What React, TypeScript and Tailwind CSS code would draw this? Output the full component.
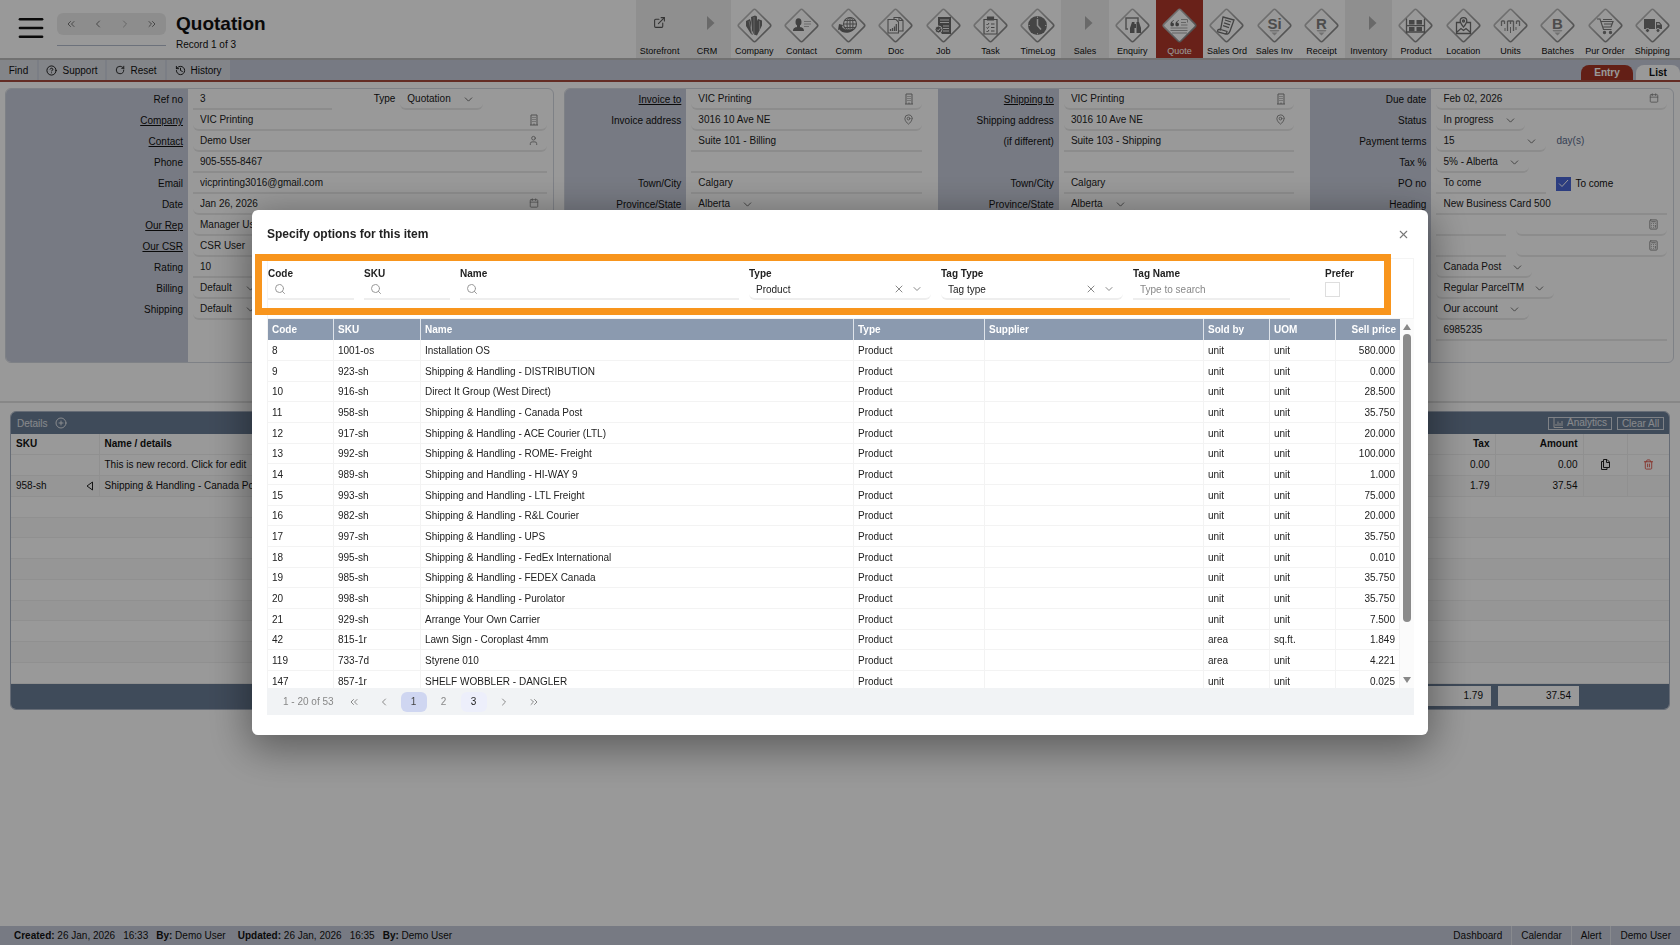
import React from "react";
import { Calculator, Calendar, ChevronDown, ChevronLeft, ChevronRight, ChevronsLeft, ChevronsRight, CircleHelp, CirclePlus, ExternalLink, History, MapPin, Menu, RotateCw, Search, Trash2, User, X } from "lucide-react";

type NavItem = {
  name: string;
  kind: "icon" | "group" | "link";
  glyph?: React.ReactNode;
};

const letter = (text: string) => (
  <>
    <text x="18.500" y="21.500" textAnchor="middle" fontSize="15" fontWeight="bold" fontFamily="Liberation Sans, sans-serif" fill="#808080">{text}</text>
    <path d="M13.500 23h10l-1 1.500h-8zM15.500 25.500h6l-3 3z" fill="#bdbdbd" />
  </>
);

const navItems: NavItem[] = [
  { name: "Storefront", kind: "link" },
  { name: "CRM", kind: "group" },
  {
    name: "Company", kind: "icon",
    glyph: <><path d="M10 14l4-2 1 3v9l2 4-2-1-5-8zM15 10l4-1.500 2 1v19l-3-1-2-4zM22 12l4 1.500v5l-4 8-1 2V14z" fill="#707070" /><path d="M18 10v17M13 14l3 13M23.500 14v10" stroke="#b8b8b8" strokeWidth=".8" /></>,
  },
  {
    name: "Contact", kind: "icon",
    glyph: <><ellipse cx="15.500" cy="15" rx="3" ry="3.800" fill="#6d6d6d" /><path d="M10 24c0-3 2-3.600 4-4v-2h3v2c2 .4 4 1 4 4z" fill="#6d6d6d" /><path d="M21 14.500h7M21 17h7M21 19.500h5" stroke="#b5b5b5" /></>,
  },
  {
    name: "Comm", kind: "icon",
    glyph: <><g fill="none" stroke="#777" strokeWidth="1.100"><circle cx="20" cy="17" r="6.500" /><ellipse cx="20" cy="17" rx="3" ry="6.500" /><path d="M13.500 17h13M20 10.500v13M14.500 13.500h11M14.500 20.500h11" /></g><path d="M9 17l4 1-1 2c3 3.500 8 4 13 1-2 5-12 7-15.500 1.500L8 23z" fill="#6b6b6b" /></>,
  },
  {
    name: "Doc", kind: "icon",
    glyph: <g fill="none" stroke="#777" strokeWidth="1.100"><path d="M11 12.500h8l2.500 2.500v11H11zM17 12V10.500h6l3 3v10.500h-4M22 10.500v3h4" /><path d="M13.500 24v-2M15.500 24v-3M17.500 24v-4.500M19.300 24v-7" strokeWidth="1.300" /></g>,
  },
  {
    name: "Job", kind: "icon",
    glyph: <><path d="M13 10h13v17h-9l-3-4-1-3z" fill="#6c6c6c" /><path d="M15 13h9M15 15.500h9M18 19h6M18 21.500h6M18 24h6" stroke="#eee" /><circle cx="13.500" cy="22.500" r="3.500" fill="#6c6c6c" stroke="#fff" /><path d="M12 22.500l1.200 1.300 2-2.500" fill="none" stroke="#fff" /></>,
  },
  {
    name: "Task", kind: "icon",
    glyph: <g fill="none" stroke="#707070" strokeWidth="1.200"><path d="M12 12.500h13v14.500H12z" /><path d="M15.500 10h6v3h-6z" fill="#707070" /><path d="M14.500 17l1 1 1.500-2M14.500 20.500l1 1 1.500-2M14.500 24l1 1 1.500-2M19 17h3.500M19 20.500h3.500M19 24h3.500" strokeWidth="1" /></g>,
  },
  {
    name: "TimeLog", kind: "icon",
    glyph: <><circle cx="18.500" cy="18.500" r="9.500" fill="#737373" /><path d="M18.500 12v6.500l3.500 4" fill="none" stroke="#eee" strokeWidth="1.500" /><path d="M18.500 9.500v1.500M18.500 26v1.500M9.500 18.500h1.500M26 18.500h1.500" stroke="#ddd" /></>,
  },
  { name: "Sales", kind: "group" },
  {
    name: "Enquiry", kind: "icon",
    glyph: <><path d="M14 22h-2V11h12v4" fill="none" stroke="#858585" strokeWidth="1.500" /><path d="M16 26v-5l2-6h2.500v11zM27 26v-5l-2-6h-2.500v11zM20 17h3v4h-3z" fill="#6e6e6e" /></>,
  },
  {
    name: "Quote", kind: "icon",
    glyph: <><path d="M13 13c-3 1-4 3-3.500 5.500 1 1.500 3.500 1 3.500-1 0-1.200-1-1.800-2-1.600 0-1.200 1-1.900 2-2.200zM18 13c-3 1-4 3-3.500 5.500 1 1.500 3.500 1 3.500-1 0-1.200-1-1.800-2-1.600 0-1.200 1-1.900 2-2.200z" fill="#666" /><path d="M20 12.500h6.500v3M20 15.500h5M20 18h6.500M9.500 21h17M9.500 23.500h17M11 26h15" stroke="#a8a8a8" fill="none" /></>,
  },
  {
    name: "Sales Ord", kind: "icon",
    glyph: <g fill="none" stroke="#707070" strokeWidth="1.300"><path d="M15 10l11 3-4 11c-1 3-3 3.500-5 2.800l-7-2c-1-1 0-2.500 1-2.500l1.500.5zM11 22l8 2.500c0 1.500-.5 2-1.500 2.400" /><path d="M17 13l6 2M16 15.800l6 2M15 18.600l6 2" /></g>,
  },
  { name: "Sales Inv", kind: "icon", glyph: letter("Si") },
  { name: "Receipt", kind: "icon", glyph: letter("R") },
  { name: "Inventory", kind: "group" },
  {
    name: "Product", kind: "icon",
    glyph: <><path d="M9.500 11.500v15M27.500 11.500v15M9.500 18.700h18M9.500 25h18" stroke="#777" strokeWidth="1.300" /><path d="M12 13h5.500v4.500H12zM19.500 13H25v4.500h-5.500zM12 20h5.500v4.300H12zM19.500 20H25v4.300h-5.500z" fill="#777" /></>,
  },
  {
    name: "Location", kind: "icon",
    glyph: <g fill="none" stroke="#6f6f6f" strokeWidth="1.300"><path d="M15 15.500h-3.500v11h14v-11H22M12 25l4-3.500 2.500 2 2.500-2 4 3.500" /><path d="M18.500 20c-2-2.500-3.300-4-3.300-6a3.300 3.300 0 016.600 0c0 2-1.300 3.500-3.300 6z" /><circle cx="18.500" cy="14" r="1" /></g>,
  },
  {
    name: "Units", kind: "icon",
    glyph: <g stroke="#8b8b8b" strokeWidth="1.300" fill="none"><path d="M9.500 14v5M12.500 14v3M15.500 14v10M18.500 14v3M21.500 14v10M24.500 14v3M27.500 14v5M9.500 14h3M15.500 14h6M24.500 14h3" /><path d="M13 21v3M18.500 20v6M24 20v3" strokeWidth="1" /></g>,
  },
  { name: "Batches", kind: "icon", glyph: letter("B") },
  {
    name: "Pur Order", kind: "icon",
    glyph: <g fill="none" stroke="#7d7d7d" strokeWidth="1.200"><path d="M10 12h3l3.500 10.500h8M14 14.500h12l-2 5.500h-8M16 12.500h9M17 17h8" /><circle cx="17.500" cy="25.500" r="1.100" fill="#7d7d7d" /><circle cx="23.500" cy="25.500" r="1.100" fill="#7d7d7d" /></g>,
  },
  {
    name: "Shipping", kind: "icon",
    glyph: <><path d="M10 12h11v10H10zM22 15h3.500l2.500 3v4h-6z" fill="#757575" /><path d="M23 16h2l1.500 2H23z" fill="#ddd" /><circle cx="13.500" cy="23.500" r="2" fill="#757575" stroke="#fff" /><circle cx="24" cy="23.500" r="2" fill="#757575" stroke="#fff" /></>,
  },
];

const products = [
  ["8", "1001-os", "Installation OS", "unit", "unit", "580.000"],
  ["9", "923-sh", "Shipping & Handling - DISTRIBUTION", "unit", "unit", "0.000"],
  ["10", "916-sh", "Direct It Group (West Direct)", "unit", "unit", "28.500"],
  ["11", "958-sh", "Shipping & Handling - Canada Post", "unit", "unit", "35.750"],
  ["12", "917-sh", "Shipping & Handling - ACE Courier (LTL)", "unit", "unit", "20.000"],
  ["13", "992-sh", "Shipping & Handling - ROME- Freight", "unit", "unit", "100.000"],
  ["14", "989-sh", "Shipping and Handling - HI-WAY 9", "unit", "unit", "1.000"],
  ["15", "993-sh", "Shipping and Handling - LTL Freight", "unit", "unit", "75.000"],
  ["16", "982-sh", "Shipping & Handling - R&L Courier", "unit", "unit", "20.000"],
  ["17", "997-sh", "Shipping & Handling - UPS", "unit", "unit", "35.750"],
  ["18", "995-sh", "Shipping & Handling - FedEx International", "unit", "unit", "0.010"],
  ["19", "985-sh", "Shipping & Handling - FEDEX Canada", "unit", "unit", "35.750"],
  ["20", "998-sh", "Shipping & Handling - Purolator", "unit", "unit", "35.750"],
  ["21", "929-sh", "Arrange Your Own Carrier", "unit", "unit", "7.500"],
  ["42", "815-1r", "Lawn Sign - Coroplast 4mm", "area", "sq.ft.", "1.849"],
  ["119", "733-7d", "Styrene 010", "area", "unit", "4.221"],
  ["147", "857-1r", "SHELF WOBBLER - DANGLER", "unit", "unit", "0.025"],
];

const BuildingIcon = () => (
  <svg width="10" height="12" viewBox="0 0 10 12" fill="none" stroke="currentColor">
    <path d="M2 11V1h6v10M1 11h8M3.500 3.500h1M5.500 3.500h1M3.500 5.500h1M5.500 5.500h1M3.500 7.500h1M5.500 7.500h1M5 9.500v1.500" />
  </svg>
);

const CloneIcon = () => (
  <svg width="10" height="11" viewBox="0 0 10 11" fill="none" stroke="#222" className="mx-auto">
    <path d="M3 2.500H1.500v8H7V9M3.500.5H7L9.500 3v5.500h-6zM6.500.5V3.500h3" />
  </svg>
);

const NavGlyph = ({ item }: { item: NavItem }) => {
  if (item.kind === "link") return <ExternalLink size={13} className="mb-[6px] text-[#555]" />;
  if (item.kind === "group") {
    return <svg width="8" height="14" viewBox="0 0 8 14" className="mb-1 ml-2"><path d="M0 0l7.500 7L0 14z" fill="#b0b0b0" /></svg>;
  }
  return (
    <svg width="37" height="37" viewBox="0 0 37 37">
      <defs>
        <linearGradient id="edge" x1="0" y1="0" x2="1" y2="0">
          <stop offset="0" stopColor="#b9b9b9" />
          <stop offset="1" stopColor="#8c8c8c" />
        </linearGradient>
      </defs>
      <rect x="6.500" y="6.500" width="24" height="24" rx="2" transform="rotate(45 18.500 18.500)" fill="#fff" stroke="url(#edge)" strokeWidth="1.600" />
      {item.glyph}
    </svg>
  );
};

const Header = () => (
  <header className="flex h-[60px] justify-between border-b-2 border-[#bdbdbd] bg-white">
    <div className="flex">
      <button aria-label="Menu" className="ml-[16px] mt-1 h-12 w-[30px]">
        <Menu size={30} strokeWidth={2} className="scale-x-110" />
      </button>
      <div className="ml-[11px] mt-[13px] h-[33px] w-[109px] border-b border-[#b4bccd]">
        <div className="flex h-[22px] items-center justify-around rounded-md bg-[#ececec] text-[#777]">
          <button aria-label="First record"><ChevronsLeft size={12} /></button>
          <button aria-label="Previous record"><ChevronLeft size={12} /></button>
          <button aria-label="Next record" className="text-[#aaa]"><ChevronRight size={12} /></button>
          <button aria-label="Last record"><ChevronsRight size={12} /></button>
        </div>
      </div>
      <div className="ml-[10px] mt-[13px]">
        <h1 className="text-[19px] leading-[22px] font-bold">Quotation</h1>
        <p className="mt-[2px] text-[10px] leading-[15px]">Record 1 of 3</p>
      </div>
    </div>
    <nav className="mr-1 grid w-[1040px] grid-cols-22">
      {navItems.map((item) => (
        <a
          key={item.name}
          href="#"
          className={
            "flex flex-col items-center pt-[6px] text-[9px] whitespace-nowrap " +
            (item.name === "Quote" ? "bg-[#b0372a] text-white" : item.kind === "icon" ? "" : "bg-[#efefef]")
          }
        >
          <span className="flex h-[38px] items-center"><NavGlyph item={item} /></span>
          <span className="leading-[14px]">{item.name}</span>
        </a>
      ))}
    </nav>
  </header>
);

const Toolbar = () => (
  <div className="flex h-[22px] items-stretch justify-between border-b-2 border-[#a64a3c] bg-[#c7ccda] text-[10px]">
    <div className="flex divide-x-2 divide-[#ced3de] bg-[#dbdee5]">
      <button className="w-[39px]">Find</button>
      <button className="flex w-[68px] items-center justify-center gap-[5px]"><CircleHelp size={11} />Support</button>
      <button className="flex w-[60px] items-center justify-center gap-[5px]"><RotateCw size={10} />Reset</button>
      <button className="flex w-[63px] items-center justify-center gap-1"><History size={11} />History</button>
    </div>
    <div className="flex items-end gap-[3px]">
      <button className="h-[15px] w-[52px] rounded-t-lg bg-[#a63526] text-[10px] font-bold text-white">Entry</button>
      <button className="h-[15px] w-[44px] rounded-t-lg bg-white text-[10px] font-bold">List</button>
    </div>
  </div>
);

type FieldProps = {
  id: string;
  value?: string;
  width?: string;
  icon?: React.ReactNode;
};

const TextField = ({ id, value = "", width = "w-full", icon }: FieldProps) => (
  <span className={"relative block h-[21px] " + width}>
    <input
      id={id}
      aria-label={id}
      defaultValue={value}
      className={"h-full w-full border-b-2 border-[#eaeaea] pl-[7px] text-[#222] outline-none " + (icon ? "rounded-b-md" : "")}
    />
    {icon && <span className="absolute top-1 right-2 text-[#888]">{icon}</span>}
  </span>
);

const SelectField = ({ id, value = "", width = "w-full" }: FieldProps) => (
  <span className={"relative block h-[21px] " + width}>
    <select id={id} className="h-full w-full appearance-none rounded-b-md border-b-2 border-[#eaeaea] pl-[7px] text-[#222] outline-none">
      <option>{value}</option>
    </select>
    <ChevronDown size={13} strokeWidth={1.500} className="pointer-events-none absolute top-1 right-2 text-[#555]" />
  </span>
);

type RowProps = {
  label?: string;
  htmlFor?: string;
  link?: boolean;
  wide?: boolean;
  children?: React.ReactNode;
};

const Row = ({ label, htmlFor, link, wide, children }: RowProps) => (
  <div className="flex h-[21px]">
    <label
      htmlFor={htmlFor}
      className={"shrink-0 bg-[#c7ccda] pr-[5px] text-right leading-[22px] " + (wide ? "w-[182px] " : "w-[121px] ") + (link ? "underline" : "")}
    >
      {label}
    </label>
    <div className="flex min-w-0 flex-1 pl-[5px]">{children}</div>
  </div>
);

const Column = ({ wide, children, className }: { wide?: boolean; children: React.ReactNode; className: string }) => (
  <div className={"flex flex-col " + className}>
    {children}
    <div className={"flex-1 bg-[#c7ccda] " + (wide ? "w-[182px]" : "w-[121px]")} />
  </div>
);

const AddressColumn = ({ prefix, second, suite }: { prefix: string; second?: string; suite: string }) => (
  <Column className="*:pr-4 *:last:pr-0">
    <Row label={prefix + " to"} htmlFor={prefix + "-to"} link><TextField id={prefix + "-to"} value="VIC Printing" icon={<BuildingIcon />} /></Row>
    <Row label={prefix + " address"} htmlFor={prefix + "-address"}><TextField id={prefix + "-address"} value="3016 10 Ave NE" icon={<MapPin size={11} />} /></Row>
    <Row label={second} htmlFor={prefix + "-suite"}><TextField id={prefix + "-suite"} value={suite} /></Row>
    <Row><TextField id={prefix + "-line3"} /></Row>
    <Row label="Town/City" htmlFor={prefix + "-city"}><TextField id={prefix + "-city"} value="Calgary" /></Row>
    <Row label="Province/State" htmlFor={prefix + "-province"}><SelectField id={prefix + "-province"} value="Alberta" width="w-[71px]" /></Row>
  </Column>
);

const QuotationForm = () => (
  <section className="mt-[6px] grid h-[275px] grid-cols-[549fr_1109fr] gap-[10px] pr-[6px] pl-[5px] text-[10px]">
    <div className="flex overflow-hidden rounded-md border border-[#d3d7e0]">
      <Column wide className="flex-1 *:pr-[6px] *:last:pr-0">
        <Row wide label="Ref no" htmlFor="ref">
          <TextField id="ref" value="3" width="w-[139px]" />
          <label htmlFor="type" className="ml-auto pr-[5px] leading-5">Type</label>
          <SelectField id="type" value="Quotation" width="w-[83px] mr-[64px]" />
        </Row>
        <Row wide label="Company" htmlFor="company" link><TextField id="company" value="VIC Printing" icon={<BuildingIcon />} /></Row>
        <Row wide label="Contact" htmlFor="contact" link><TextField id="contact" value="Demo User" icon={<User size={11} />} /></Row>
        <Row wide label="Phone" htmlFor="phone"><TextField id="phone" value="905-555-8467" /></Row>
        <Row wide label="Email" htmlFor="email"><TextField id="email" value="vicprinting3016@gmail.com" /></Row>
        <Row wide label="Date" htmlFor="date"><TextField id="date" value="Jan 26, 2026" icon={<Calendar size={10} />} /></Row>
        <Row wide label="Our Rep" htmlFor="rep" link><TextField id="rep" value="Manager User" icon={<User size={11} />} /></Row>
        <Row wide label="Our CSR" htmlFor="csr" link><TextField id="csr" value="CSR User" icon={<User size={11} />} /></Row>
        <Row wide label="Rating" htmlFor="rating"><TextField id="rating" value="10" /></Row>
        <Row wide label="Billing" htmlFor="billing"><SelectField id="billing" value="Default" width="w-[72px]" /></Row>
        <Row wide label="Shipping" htmlFor="shipping"><SelectField id="shipping" value="Default" width="w-[72px]" /></Row>
      </Column>
    </div>
    <div className="grid grid-cols-[373fr_373fr_363fr] overflow-hidden rounded-md border border-[#d3d7e0]">
      <AddressColumn prefix="Invoice" suite="Suite 101 - Billing" />
      <AddressColumn prefix="Shipping" second="(if different)" suite="Suite 103 - Shipping" />
      <Column className="*:pr-[6px] *:last:pr-0">
        <Row label="Due date" htmlFor="due"><TextField id="due" value="Feb 02, 2026" icon={<Calendar size={10} />} /></Row>
        <Row label="Status" htmlFor="status"><SelectField id="status" value="In progress" width="w-[89px]" /></Row>
        <Row label="Payment terms" htmlFor="terms">
          <SelectField id="terms" value="15" width="w-[110px]" />
          <span className="ml-[10px] leading-5 text-[#5b6b8c]">day(s)</span>
        </Row>
        <Row label="Tax %" htmlFor="tax"><SelectField id="tax" value="5% - Alberta" width="w-[93px]" /></Row>
        <Row label="PO no" htmlFor="po">
          <TextField id="po" value="To come" width="w-[110px]" />
          <label className="ml-[10px] flex items-center gap-1">
            <input type="checkbox" defaultChecked className="h-[14px] w-[15px] appearance-none bg-[#4a66d6]" />
            <svg width="11" height="9" viewBox="0 0 11 9" className="mr-[2px] -ml-[17px]"><path d="M1 4.500l3 3L10 1" fill="none" stroke="#fff" /></svg>
            To come
          </label>
        </Row>
        <Row label="Heading" htmlFor="heading"><TextField id="heading" value="New Business Card 500" /></Row>
        <Row>
          <TextField id="Estimate" width="w-[70px] mr-[10px]" />
          <TextField id="Estimate no" width="flex-1" icon={<Calculator size={11} />} />
        </Row>
        <Row>
          <TextField id="Job" width="w-[70px] mr-[10px]" />
          <TextField id="Job no" width="flex-1" icon={<Calculator size={11} />} />
        </Row>
        <Row label="Carrier" htmlFor="carrier"><SelectField id="carrier" value="Canada Post" width="w-[96px]" /></Row>
        <Row label="Service" htmlFor="service"><SelectField id="service" value="Regular ParcelTM" width="w-[118px]" /></Row>
        <Row label="Bill to" htmlFor="account"><SelectField id="account" value="Our account" width="w-[93px]" /></Row>
        <Row><TextField id="Account no" value="6985235" /></Row>
      </Column>
    </div>
  </section>
);

const detailRows = [
  ["", "This is new record. Click for edit", "0.00", "0.00"],
  ["958-sh", "Shipping & Handling - Canada Post", "1.79", "37.54"],
  ...Array.from({ length: 9 }, () => ["", "", "", ""]),
];

const Details = () => (
  <section className="mx-[10px] mt-2 overflow-hidden rounded-md border border-[#a9b3c3] text-[10px]">
    <div className="flex h-[22px] items-center bg-[#6a7d96] pr-[5px] pl-[6px] text-white/80">
      <span className="mr-[7px]">Details</span>
      <button aria-label="Add line"><CirclePlus size={12} /></button>
      <button className="ml-auto flex h-[13px] w-[64px] items-center justify-center gap-1 border border-white/70 leading-3">
        <svg width="10" height="10" viewBox="0 0 10 10"><path d="M1 0v9.500h9M3 8V6M5 8V3.500M7 8V5M9 8V3" fill="none" stroke="#ddd" /></svg>
        Analytics
      </button>
      <button className="ml-[5px] h-[13px] w-[47px] border border-white/70 leading-[11px]">Clear All</button>
    </div>
    <table className="w-full table-fixed border-collapse">
      <thead>
        <tr className="h-5 border-b border-[#f0f0f0]">
          <th className="w-[88px] border-r border-[#f0f0f0] px-[5px] text-left">SKU</th>
          <th className="px-[5px] text-left">Name / details</th>
          <th className="w-[88px] border-r border-[#f0f0f0] px-[5px] text-right">Tax</th>
          <th className="w-[88px] border-r border-[#f0f0f0] px-[5px] text-right">Amount</th>
          <th className="w-[44px] border-r border-[#f0f0f0]" />
          <th className="w-[42px]" />
        </tr>
      </thead>
      <tbody>
        {detailRows.map(([sku, name, tax, amount], i) => {
          const filled = i < 2 ? "border-r border-[#f0f0f0] " : "";
          return (
            <tr key={i} className="h-[21px] border-b border-[#f0f0f0] even:bg-[#fbfbfb] nth-[4n]:h-5">
              <td className={filled + "px-[5px]"}>
                <span className="flex items-center justify-between">
                  {sku}
                  {sku && <svg width="8" height="10" viewBox="0 0 8 10"><path d="M6.500 1v8L1 5z" fill="none" stroke="#222" /></svg>}
                </span>
              </td>
              <td className="px-[5px] whitespace-nowrap">{name}</td>
              <td className={filled + "px-[5px] text-right"}>{tax}</td>
              <td className={filled + "px-[5px] text-right"}>{amount}</td>
              <td className={filled}>{i === 0 && <CloneIcon />}</td>
              <td>{i === 0 && <Trash2 size={11} className="mx-auto text-[#e0574a]" />}</td>
            </tr>
          );
        })}
      </tbody>
    </table>
    <div className="flex h-[25px] items-center justify-end gap-[7px] bg-[#6a7d96] pr-[90px] text-right">
      <span className="h-5 w-[81px] bg-white pr-2 leading-5">1.79</span>
      <span className="h-5 w-[81px] bg-white pr-2 leading-5">37.54</span>
    </div>
  </section>
);

const StatusBar = () => (
  <footer className="mt-auto flex h-[19px] items-center justify-between bg-[#c7ccda] text-[10px]">
    <div className="flex pl-[14px]">
      <span><b>Created:</b> 26 Jan, 2026</span>
      <span className="ml-2">16:33</span>
      <span className="ml-2"><b>By:</b> Demo User</span>
      <span className="ml-3"><b>Updated:</b> 26 Jan, 2026</span>
      <span className="ml-2">16:35</span>
      <span className="ml-2"><b>By:</b> Demo User</span>
    </div>
    <div className="flex h-full items-center divide-x divide-white/50 *:px-[9px] *:leading-[19px]">
      <a href="#">Dashboard</a>
      <a href="#">Calendar</a>
      <a href="#">Alert</a>
      <a href="#">Demo User</a>
    </div>
  </footer>
);

const SearchFilter = ({ label, width }: { label: string; width: string }) => (
  <div className={width}>
    <label htmlFor={"filter-" + label} className="block leading-3 font-bold">{label}</label>
    <span className="relative block">
      <input id={"filter-" + label} className="h-5 w-full border-b-2 border-[#eeeeee] pl-5 outline-none" />
      <Search size={12} className="absolute top-[3px] left-[6px] text-[#999]" />
    </span>
  </div>
);

const SelectFilter = ({ label, value }: { label: string; value: string }) => (
  <div className="w-[182px]">
    <label htmlFor={"filter-" + label} className="block leading-3 font-bold">{label}</label>
    <span className="relative block">
      <select id={"filter-" + label} className="h-5 w-full appearance-none rounded-b-md border-b-2 border-[#eeeeee] pl-[7px] outline-none">
        <option>{value}</option>
      </select>
      <button aria-label={"Clear " + label} className="absolute top-[3px] right-[26px] text-[#888]"><X size={12} /></button>
      <ChevronDown size={12} className="pointer-events-none absolute top-[3px] right-2 text-[#888]" />
    </span>
  </div>
);

const Filters = () => (
  <div className="relative mt-3 flex h-[61px] gap-[10px] border border-[#f4f4f4] pt-[9px]">
    <SearchFilter label="Code" width="w-[86px]" />
    <SearchFilter label="SKU" width="w-[86px]" />
    <SearchFilter label="Name" width="w-[279px]" />
    <SelectFilter label="Type" value="Product" />
    <SelectFilter label="Tag Type" value="Tag type" />
    <div className="w-[157px]">
      <label htmlFor="tag-name" className="block leading-3 font-bold">Tag Name</label>
      <input id="tag-name" placeholder="Type to search" className="block h-5 w-full border-b-2 border-[#eeeeee] pl-[7px] outline-none placeholder:text-[#888]" />
    </div>
    <div className="ml-[25px]">
      <label htmlFor="prefer" className="block leading-3 font-bold">Prefer</label>
      <input id="prefer" type="checkbox" className="mt-[2px] block h-[15px] w-[15px] appearance-none border border-[#dedede]" />
    </div>
    <div className="pointer-events-none absolute -top-[5px] right-[22px] -left-[13px] h-[61px] border-7 border-[#f8951d]" />
  </div>
);

const headCell = "border-r border-[#dfe4ea] px-1 text-left";
const cell = "border-r border-b border-[#f3f3f3] px-1";

const ProductTable = () => (
  <div className="flex h-[369px] overflow-hidden">
    <div className="min-w-0 flex-1 overflow-hidden">
      <table className="w-full table-fixed border-separate border-spacing-0 border-l border-[#f3f3f3]">
        <thead>
          <tr className="h-[21px] bg-[#8b9aaf] text-white">
            <th className={headCell + " w-[66px]"}>Code</th>
            <th className={headCell + " w-[87px]"}>SKU</th>
            <th className={headCell}>Name</th>
            <th className={headCell + " w-[131px]"}>Type</th>
            <th className={headCell + " w-[219px]"}>Supplier</th>
            <th className={headCell + " w-[66px]"}>Sold by</th>
            <th className={headCell + " w-[66px]"}>UOM</th>
            <th className="w-[64px] px-1 text-right">Sell price</th>
          </tr>
        </thead>
        <tbody>
          {products.map(([code, sku, name, soldBy, uom, price]) => (
            <tr key={code} className="h-[21px] nth-[3n]:h-5">
              <td className={cell}>{code}</td>
              <td className={cell}>{sku}</td>
              <td className={cell}>{name}</td>
              <td className={cell}>Product</td>
              <td className={cell} />
              <td className={cell}>{soldBy}</td>
              <td className={cell}>{uom}</td>
              <td className={cell + " text-right"}>{price}</td>
            </tr>
          ))}
        </tbody>
      </table>
    </div>
    <div className="flex w-[14px] flex-col items-center bg-[#fbfbfb] py-[5px]">
      <svg width="8" height="6" viewBox="0 0 8 6"><path d="M4 0l4 6H0z" fill="#888" /></svg>
      <div className="mt-1 h-[288px] w-2 rounded-full bg-[#8b8b8b]" />
      <svg width="8" height="6" viewBox="0 0 8 6" className="mt-auto"><path d="M4 6l4-6H0z" fill="#888" /></svg>
    </div>
  </div>
);

const Paginator = () => (
  <div className="flex h-[27px] items-center bg-[#f1f3f5] pl-4 text-[#888]">
    <span className="mr-[7px]">1 - 20 of 53</span>
    <div className="flex gap-1 *:flex *:h-5 *:w-[26px] *:items-center *:justify-center *:rounded-md">
      <button aria-label="First page"><ChevronsLeft size={12} /></button>
      <button aria-label="Previous page"><ChevronLeft size={12} /></button>
      <button className="bg-[#cfd6f1] text-[#444]">1</button>
      <button>2</button>
      <button className="bg-[#edeffb] text-[#222]">3</button>
      <button aria-label="Next page"><ChevronRight size={12} /></button>
      <button aria-label="Last page"><ChevronsRight size={12} /></button>
    </div>
  </div>
);

const ItemDialog = () => (
  <div className="fixed inset-0 flex items-center justify-center bg-black/40">
    <div
      role="dialog"
      aria-label="Specify options for this item"
      className="w-[70%] rounded-md bg-white pt-3 pr-[14px] pb-5 pl-[15px] text-[10px] text-[#222] shadow-[0_10px_40px_4px_rgba(0,0,0,0.4)]"
    >
      <div className="flex h-6 items-center justify-between">
        <h2 className="text-[12px] font-bold">Specify options for this item</h2>
        <button aria-label="Close" className="mr-1 text-[#777]"><X size={13} /></button>
      </div>
      <Filters />
      <ProductTable />
      <Paginator />
    </div>
  </div>
);

const App = () => {
  return (
    <div className="flex min-h-screen flex-col bg-white font-['Liberation_Sans',Arial,sans-serif] text-[#111]">
      <Header />
      <Toolbar />
      <QuotationForm />
      <hr className="mt-[38px] border-t-2 border-[#e2e2e2]" />
      <Details />
      <StatusBar />
      <ItemDialog />
    </div>
  );
};

export default App;
